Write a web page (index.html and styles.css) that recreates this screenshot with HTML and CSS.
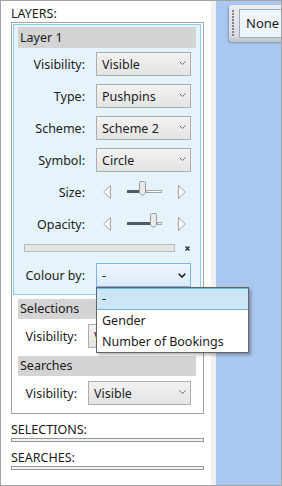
FILE: index.html
```html
<!DOCTYPE html>
<html lang="en">
<head>
  <meta charset="UTF-8">
  <title>Layers</title>
  <link rel="stylesheet" href="styles.css">
</head>
<body>
  <div class="app">
    <!-- Layers panel -->
    <aside class="panel">
      <div class="panel-title">LAYERS:</div>
      <div class="group">
        <div class="layer">
          <div class="section-head">Layer 1</div>
          <div class="fields fields-layer">
            <span class="field-label">Visibility:</span>
            <div class="select"><span>Visible</span><svg class="chevron" width="7" height="4" viewBox="0 0 7 4"><polyline points="0.5,0.5 3.5,3.5 6.5,0.5"/></svg></div>

            <span class="field-label">Type:</span>
            <div class="select"><span>Pushpins</span><svg class="chevron" width="7" height="4" viewBox="0 0 7 4"><polyline points="0.5,0.5 3.5,3.5 6.5,0.5"/></svg></div>

            <span class="field-label">Scheme:</span>
            <div class="select"><span>Scheme 2</span><svg class="chevron" width="7" height="4" viewBox="0 0 7 4"><polyline points="0.5,0.5 3.5,3.5 6.5,0.5"/></svg></div>

            <span class="field-label">Symbol:</span>
            <div class="select"><span>Circle</span><svg class="chevron" width="7" height="4" viewBox="0 0 7 4"><polyline points="0.5,0.5 3.5,3.5 6.5,0.5"/></svg></div>

            <span class="field-label">Size:</span>
            <div class="slider">
              <svg class="arrow" width="8" height="14" viewBox="0 0 8 14"><path d="M7.5,0.5 L0.5,7 L7.5,13.5 Z"/></svg>
              <div class="track">
                <div class="track-fill" style="width:12px"></div>
                <svg class="thumb" width="7" height="15" viewBox="0 0 7 15"><path d="M0.5,1.5 Q0.5,0.5 1.5,0.5 H5.5 Q6.5,0.5 6.5,1.5 V12 L3.5,14.5 L0.5,12 Z"/></svg>
                <div class="track-rest"></div>
              </div>
              <svg class="arrow" width="8" height="14" viewBox="0 0 8 14"><path d="M0.5,0.5 L7.5,7 L0.5,13.5 Z"/></svg>
            </div>

            <span class="field-label">Opacity:</span>
            <div class="slider">
              <svg class="arrow" width="8" height="14" viewBox="0 0 8 14"><path d="M7.5,0.5 L0.5,7 L7.5,13.5 Z"/></svg>
              <div class="track">
                <div class="track-fill" style="width:23px"></div>
                <svg class="thumb" width="7" height="15" viewBox="0 0 7 15"><path d="M0.5,1.5 Q0.5,0.5 1.5,0.5 H5.5 Q6.5,0.5 6.5,1.5 V12 L3.5,14.5 L0.5,12 Z"/></svg>
                <div class="track-rest"></div>
              </div>
              <svg class="arrow" width="8" height="14" viewBox="0 0 8 14"><path d="M0.5,0.5 L7.5,7 L0.5,13.5 Z"/></svg>
            </div>

            <div class="progress-row">
              <div class="progress"></div>
              <svg class="clear" width="5" height="5" viewBox="0 0 5 5"><path d="M0.5,0.5 L4.5,4.5 M4.5,0.5 L0.5,4.5"/></svg>
            </div>

            <span class="field-label">Colour by:</span>
            <div class="select select-open">
              <span>-</span><svg class="chevron" width="8" height="5" viewBox="0 0 8 5"><polyline points="0.7,0.7 4,4 7.3,0.7"/></svg>
              <ul class="dropdown">
                <li class="active">-</li>
                <li>Gender</li>
                <li>Number of Bookings</li>
              </ul>
            </div>
          </div>
        </div>

        <div class="sections">
          <div class="section-head">Selections</div>
          <div class="fields fields-section">
            <span class="field-label">Visibility:</span>
            <div class="select"><span>Visible</span><svg class="chevron" width="7" height="4" viewBox="0 0 7 4"><polyline points="0.5,0.5 3.5,3.5 6.5,0.5"/></svg></div>
          </div>

          <div class="section-head next">Searches</div>
          <div class="fields fields-section">
            <span class="field-label">Visibility:</span>
            <div class="select"><span>Visible</span><svg class="chevron" width="7" height="4" viewBox="0 0 7 4"><polyline points="0.5,0.5 3.5,3.5 6.5,0.5"/></svg></div>
          </div>
        </div>
      </div>

      <div class="panel-title below">SELECTIONS:</div>
      <div class="list-bar"></div>
      <div class="panel-title below">SEARCHES:</div>
      <div class="list-bar"></div>
    </aside>

    <div class="splitter"></div>

    <!-- Map area -->
    <main class="map">
      <div class="toolbar">
        <span class="grip"></span>
        <div class="toolbar-box">None</div>
      </div>
    </main>
  </div>
</body>
</html>
```

FILE: styles.css
```css
html, body {
  margin: 0;
  padding: 0;
  font-family: 'Noto Sans', 'Open Sans', sans-serif;
  font-size: 12.5px;
  color: #1b1b22;
}
.app {
  display: flex;
  width: 282px;
  height: 486px;
  border: 1px solid #a3a3a3;
  box-sizing: border-box;
  overflow: hidden;
}
/* Left panel */
.panel {
  width: 210px;
  flex: none;
  background: #fff;
  padding: 5px 7px 0 10px;
  box-sizing: border-box;
}
.panel-title {
  height: 16px;
  line-height: 16px;
}
.panel-title.below {
  margin-top: 8px;
}
.group {
  border: 1px solid #a5a5a5;
  padding: 1px 2px 8px 1px;
}
.layer {
  position: relative;
  z-index: 2;
  border: 1px solid #8ccdef;
  background: #e5f3fb;
  padding: 2px 4px 7px 4px;
}
.section-head {
  height: 20px;
  line-height: 20px;
  padding-left: 2px;
  background: #d4d4d4;
}
.layer .section-head {
  height: 21px;
  line-height: 21px;
}
.section-head.next {
  margin-top: 8px;
}
.sections {
  padding: 4px 5px 0 5px;
}
/* Label + control grid */
.fields {
  display: grid;
  column-gap: 11px;
  row-gap: 8px;
  align-items: center;
  padding: 4px 5px 0 7px;
}
.sections .fields {
  padding-top: 5px;
}
.fields-layer {
  grid-template-columns: 60px 1fr;
}
.fields-section {
  grid-template-columns: 52px 1fr;
}
.field-label {
  text-align: right;
  white-space: nowrap;
}
/* Drop-down */
.select {
  position: relative;
  height: 24px;
  box-sizing: border-box;
  border: 1px solid #acacac;
  background: linear-gradient(#f2f2f2, #e4e4e4);
  display: flex;
  align-items: center;
  justify-content: space-between;
  padding: 0 4px 0 5px;
}
.chevron {
  fill: none;
  stroke: #6b6b6b;
  stroke-width: 1;
  margin-top: -2px;
}
.select-open {
  border-color: #7eb4ea;
  background: linear-gradient(#edf5fd, #dcecfc);
}
.select-open .chevron {
  stroke: #1a1a1a;
  stroke-width: 1.6;
  margin-top: 0;
}
.dropdown {
  position: absolute;
  top: calc(100% + 1px);
  left: -1px;
  width: 153px;
  margin: 0;
  padding: 0;
  list-style: none;
  background: #fff;
  border: 1px solid #646464;
  box-sizing: border-box;
  box-shadow: 2px 2px 3px rgba(0, 0, 0, 0.3);
}
.dropdown li {
  height: 21px;
  line-height: 22px;
  padding-left: 5px;
  box-sizing: border-box;
}
.dropdown li.active {
  height: 22px;
  background: #cbe7f7;
  border: 1px solid #73b4e0;
  border-left: none;
  border-right: none;
  line-height: 20px;
}
/* Sliders */
.slider {
  display: flex;
  align-items: center;
  height: 24px;
  padding-left: 7px;
  gap: 16px;
}
.arrow {
  fill: #f6f6f6;
  stroke: #a6a6a6;
  stroke-width: 1;
}
.track {
  display: flex;
  align-items: flex-start;
  width: 35px;
  height: 24px;
}
.track-fill {
  height: 3px;
  margin-top: 10px;
  background: #4f5b62;
}
.track-rest {
  flex: 1;
  height: 3px;
  margin-top: 10px;
  box-sizing: border-box;
  border: 1px solid #9ea6aa;
  background: #fff;
}
.thumb {
  margin-top: 1px;
  fill: #e9e9e9;
  stroke: #9a9a9a;
  stroke-width: 1;
}
.progress-row {
  grid-column: 1 / -1;
  display: flex;
  align-items: center;
  height: 8px;
  margin: 0 0 3px -1px;
}
.progress {
  flex: 1;
  height: 8px;
  box-sizing: border-box;
  border: 1px solid #bcbcbc;
  background: #e6e6e6;
}
.clear {
  margin: 0 1px 0 10px;
  stroke: #2a2a2a;
  stroke-width: 1.4;
}
.list-bar {
  height: 4px;
  box-sizing: border-box;
  border: 1px solid #999;
  background: #f2f2f2;
}
/* Splitter + map */
.splitter {
  width: 5px;
  flex: none;
  background: #f0f0f0;
}
.map {
  flex: 1;
  min-width: 0;
  overflow: hidden;
  background: #aac7f0;
  padding: 4px 0 0 13px;
}
.toolbar {
  display: flex;
  align-items: center;
  width: 80px;
  height: 37px;
  box-sizing: border-box;
  padding-left: 3px;
  border-radius: 3px 0 0 3px;
  background: linear-gradient(#eceef2, #d6dae1 85%, #b9bec6);
  box-shadow: -1px 1px 2px rgba(0, 0, 0, 0.25);
}
.grip {
  width: 2px;
  height: 27px;
  flex: none;
  background: repeating-linear-gradient(#7c848f 0 2px, transparent 2px 3px);
}
.toolbar-box {
  flex: none;
  width: 70px;
  height: 29px;
  margin-left: 5px;
  box-sizing: border-box;
  border: 1px solid #a1a9b5;
  background: #eef4fc;
  padding-left: 6px;
  line-height: 27px;
  font-size: 13px;
}
```
